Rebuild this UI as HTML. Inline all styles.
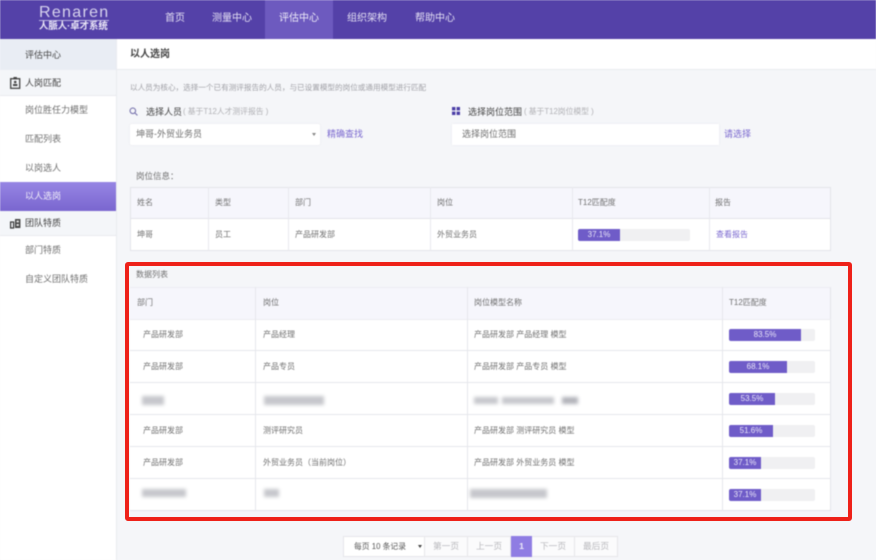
<!DOCTYPE html>
<html lang="zh"><head><meta charset="utf-8"><style>
html,body{margin:0;padding:0}
body{width:876px;height:560px;overflow:hidden;position:relative;background:#f5f6f9;font-family:"Liberation Sans","Noto Sans CJK SC",sans-serif;color:#666}
div,a,span.a{position:absolute;box-sizing:border-box;white-space:nowrap}
.t{font-size:8px;line-height:12px;color:#707070}
.s{font-size:9px;line-height:12px;color:#707070}
.n{top:12px;font-size:10px;line-height:14px;color:#e4e0f4}
.b{filter:blur(1.8px);background:#c6c7cc}
.bar{left:729px;width:86px;height:12px;background:#f0f0f2;border-radius:2px}
.fill{left:0;top:0;height:12px;background:#6f5cc8;border-radius:2px 0 0 2px;color:#e9e6f8;font-size:8px;line-height:12px;text-align:center}
.pg{top:536px;height:21px;background:#fbfbfc;border:1px solid #e6e6ea;border-left:0;font-size:8.7px;line-height:19px;text-align:center;color:#b9b9bd}
</style></head><body>
<div id="root" style="left:0;top:0;width:876px;height:560px;filter:blur(.45px)">
<!-- nav -->
<div style="left:0;top:0;width:876px;height:39px;background:#5441a8"></div>
<div style="left:265px;top:0;width:68px;height:39px;background:#6d5abf"></div>
<div style="left:39px;top:4px;font-size:16px;line-height:18px;letter-spacing:1.3px;color:#d8d4ee;font-family:'Liberation Sans',sans-serif">Renaren</div>
<div style="left:39px;top:20px;width:70px;height:1px;background:#b9b2e0"></div>
<div style="left:39px;top:20px;font-size:9.4px;line-height:12px;color:#ece9f8;font-weight:bold">人脈人·卓才系统</div>
<div class="n" style="left:165px">首页</div>
<div class="n" style="left:212px">测量中心</div>
<div class="n" style="left:279px;color:#efedf9">评估中心</div>
<div class="n" style="left:347px">组织架构</div>
<div class="n" style="left:415px">帮助中心</div>
<!-- sidebar -->
<div style="left:0;top:39px;width:117px;height:521px;background:#fff;border-right:1px solid #e9ebef"></div>
<div style="left:0;top:39px;width:116px;height:31px;background:#e9edf4"></div>
<div class="s" style="left:25px;top:49px;color:#444">评估中心</div>
<div style="left:0;top:70px;width:116px;height:26px;background:#f4f6f9;border-bottom:1px solid #e8eaef"></div>
<svg style="position:absolute;left:10px;top:77px" width="11" height="12" viewBox="0 0 11 12"><rect x="0.7" y="1.7" width="9" height="9.6" fill="none" stroke="#444" stroke-width="1.3"/><rect x="3.5" y="0" width="3.4" height="2.4" fill="#444"/><circle cx="5.2" cy="5" r="1.3" fill="#444"/><rect x="3" y="7" width="4.4" height="2" fill="#444"/></svg>
<div class="s" style="left:25px;top:77px;color:#444">人岗匹配</div>
<div class="s" style="left:25px;top:104px">岗位胜任力模型</div>
<div class="s" style="left:25px;top:133px">匹配列表</div>
<div class="s" style="left:25px;top:162px">以岗选人</div>
<div style="left:0;top:182px;width:116px;height:29px;background:linear-gradient(#9685e4,#7a66cf)"></div>
<div class="s" style="left:25px;top:190px;color:#efedf9">以人选岗</div>
<div style="left:0;top:211px;width:116px;height:25px;background:#f4f6f9;border-bottom:1px solid #e8eaef"></div>
<svg style="position:absolute;left:10px;top:218px" width="11" height="11" viewBox="0 0 11 11"><rect x="0.6" y="4" width="3" height="6" fill="none" stroke="#333" stroke-width="1.2"/><rect x="5" y="1" width="5.4" height="9" fill="#444"/><rect x="6.5" y="2.5" width="2.4" height="2" fill="#ddd"/><rect x="6.5" y="6" width="2.4" height="2" fill="#ddd"/></svg>
<div class="s" style="left:25px;top:217px;color:#444">团队特质</div>
<div class="s" style="left:25px;top:244px">部门特质</div>
<div class="s" style="left:25px;top:273px">自定义团队特质</div>
<!-- title -->
<div style="left:117px;top:39px;width:759px;height:31px;background:#fff;border-bottom:1px solid #e9ebef"></div>
<div style="left:130px;top:48px;font-size:10px;line-height:14px;color:#444;font-weight:bold">以人选岗</div>
<div class="t" style="left:130px;top:82px;font-size:7.6px;color:#a0a0a6">以人员为核心，选择一个已有测评报告的人员，与已设置模型的岗位或通用模型进行匹配</div>
<!-- selectors -->
<svg style="position:absolute;left:129px;top:107px" width="9" height="9" viewBox="0 0 9 9"><circle cx="3.8" cy="3.8" r="2.8" fill="none" stroke="#6f6aa8"/><path d="M6 6l2.4 2.4" stroke="#6f6aa8"/></svg>
<div class="t" style="left:146px;top:106px;color:#444;font-size:9px">选择人员</div>
<div class="t" style="left:183px;top:106px;font-size:7.8px;color:#b0b0b4">( 基于T12人才测评报告 )</div>
<div style="left:130px;top:124px;width:190px;height:21px;background:#fff;border-radius:2px;box-shadow:0 0 2px #e6e7ec"></div>
<div class="t" style="left:136px;top:128px;font-size:9px">坤哥-外贸业务员</div>
<div style="left:312px;top:133px;border:2px solid transparent;border-top:3px solid #888;border-bottom:0"></div>
<div class="t" style="left:327px;top:128px;color:#7a68cf;font-size:9px">精确查找</div>
<svg style="position:absolute;left:452px;top:107px" width="8" height="8" viewBox="0 0 8 8" fill="#4a3da6"><rect width="3.4" height="3.4"/><rect x="4.6" width="3.4" height="3.4"/><rect y="4.6" width="3.4" height="3.4"/><rect x="4.6" y="4.6" width="3.4" height="3.4"/></svg>
<div class="t" style="left:468px;top:106px;color:#444;font-size:9px">选择岗位范围</div>
<div class="t" style="left:524px;top:106px;font-size:7.8px;color:#b0b0b4">( 基于T12岗位模型 )</div>
<div style="left:452px;top:124px;width:267px;height:21px;background:#fff;box-shadow:0 0 2px #e6e7ec"></div>
<div class="t" style="left:462px;top:128px;font-size:9px">选择岗位范围</div>
<div class="t" style="left:724px;top:128px;color:#7a68cf;font-size:9px">请选择</div>
<div class="t" style="left:136px;top:170px;font-size:8.5px">岗位信息：</div>
<!-- table 1 -->
<div style="left:130px;top:187px;width:701px;height:64px;background:#fff;border:1px solid #e3e4ea"></div>
<div style="left:131px;top:188px;width:699px;height:31px;background:#f6f6fc;border-bottom:1px solid #e3e4ea"></div>
<div style="left:208px;top:187px;width:1px;height:64px;background:#e8e9ee"></div>
<div style="left:288px;top:187px;width:1px;height:64px;background:#e8e9ee"></div>
<div style="left:430px;top:187px;width:1px;height:64px;background:#e8e9ee"></div>
<div style="left:572px;top:187px;width:1px;height:64px;background:#e8e9ee"></div>
<div style="left:709px;top:187px;width:1px;height:64px;background:#e8e9ee"></div>
<div class="t" style="left:137px;top:197px">姓名</div><div class="t" style="left:215px;top:197px">类型</div><div class="t" style="left:295px;top:197px">部门</div><div class="t" style="left:437px;top:197px">岗位</div><div class="t" style="left:578px;top:197px">T12匹配度</div><div class="t" style="left:715px;top:197px">报告</div>
<div class="t" style="left:137px;top:229px">坤哥</div><div class="t" style="left:215px;top:229px">员工</div><div class="t" style="left:295px;top:229px">产品研发部</div><div class="t" style="left:437px;top:229px">外贸业务员</div>
<div class="bar" style="left:578px;top:229px;width:112px"><div class="fill" style="width:42px">37.1%</div></div>
<div class="t" style="left:716px;top:229px;color:#7a68cf">查看报告</div>
<!-- data table -->
<div class="t" style="left:136px;top:269px">数据列表</div>
<div style="left:130px;top:287px;width:701px;height:224px;background:#fff;border:1px solid #e3e4ea;border-top:0;border-left:0"></div>
<div style="left:130px;top:287px;width:701px;height:32px;background:#f6f6fc;border-top:1px solid #ececf2;border-right:1px solid #e3e4ea"></div>
<div style="left:130px;top:319px;width:701px;height:1px;background:#ececf1"></div>
<div style="left:130px;top:350px;width:701px;height:1px;background:#e6e7ec"></div>
<div style="left:130px;top:382px;width:701px;height:1px;background:#e6e7ec"></div>
<div style="left:130px;top:414px;width:701px;height:1px;background:#e6e7ec"></div>
<div style="left:130px;top:446px;width:701px;height:1px;background:#e6e7ec"></div>
<div style="left:130px;top:478px;width:701px;height:1px;background:#e6e7ec"></div>
<div style="left:255px;top:287px;width:1px;height:224px;background:#e6e7ec"></div>
<div style="left:467px;top:287px;width:1px;height:224px;background:#e6e7ec"></div>
<div style="left:722px;top:287px;width:1px;height:224px;background:#e6e7ec"></div>
<div class="t" style="left:137px;top:297px">部门</div><div class="t" style="left:263px;top:297px">岗位</div><div class="t" style="left:474px;top:297px">岗位模型名称</div><div class="t" style="left:729px;top:297px">T12匹配度</div>
<div class="t" style="left:143px;top:329px">产品研发部</div><div class="t" style="left:263px;top:329px">产品经理</div><div class="t" style="left:474px;top:329px">产品研发部 产品经理 模型</div>
<div class="t" style="left:143px;top:361px">产品研发部</div><div class="t" style="left:263px;top:361px">产品专员</div><div class="t" style="left:474px;top:361px">产品研发部 产品专员 模型</div>
<div class="t" style="left:143px;top:425px">产品研发部</div><div class="t" style="left:263px;top:425px">测评研究员</div><div class="t" style="left:474px;top:425px">产品研发部 测评研究员 模型</div>
<div class="t" style="left:143px;top:457px">产品研发部</div><div class="t" style="left:263px;top:457px">外贸业务员（当前岗位）</div><div class="t" style="left:474px;top:457px">产品研发部 外贸业务员 模型</div>
<!-- blurred -->
<div class="b" style="left:142px;top:396px;width:22px;height:9px"></div>
<div class="b" style="left:264px;top:396px;width:60px;height:9px"></div>
<div class="b" style="left:474px;top:397px;width:24px;height:7px"></div>
<div class="b" style="left:502px;top:397px;width:52px;height:7px"></div>
<div class="b" style="left:562px;top:397px;width:16px;height:7px;background:#b2b3ba"></div>
<div class="b" style="left:142px;top:489px;width:44px;height:8px"></div>
<div class="b" style="left:264px;top:489px;width:15px;height:8px"></div>
<div class="b" style="left:470px;top:489px;width:77px;height:9px"></div>
<!-- bars -->
<div class="bar" style="top:329px"><div class="fill" style="width:72px">83.5%</div></div>
<div class="bar" style="top:361px"><div class="fill" style="width:58px">68.1%</div></div>
<div class="bar" style="top:393px"><div class="fill" style="width:46px">53.5%</div></div>
<div class="bar" style="top:425px"><div class="fill" style="width:44px">51.6%</div></div>
<div class="bar" style="top:457px"><div class="fill" style="width:32px">37.1%</div></div>
<div class="bar" style="top:489px"><div class="fill" style="width:32px">37.1%</div></div>
<!-- pagination -->
<div class="pg" style="left:343px;width:82px;border-left:1px solid #e6e6ea;color:#555;text-align:left;padding-left:10px;background:#fff;font-size:7.8px">每页 10 条记录</div>
<div style="left:418px;top:545px;border:2px solid transparent;border-top:3px solid #444;border-bottom:0"></div>
<div class="pg" style="left:425px;width:43px">第一页</div>
<div class="pg" style="left:468px;width:43px">上一页</div>
<div class="pg" style="left:511px;width:21px;background:#8f7de3;border:0;line-height:21px;color:#efedf9;font-weight:bold">1</div>
<div class="pg" style="left:532px;width:43px">下一页</div>
<div class="pg" style="left:575px;width:43px">最后页</div>
</div>
<!-- red box -->
<div style="left:125px;top:262px;width:727px;height:259px;border:4px solid #ee2119;border-radius:3px"></div>
</body></html>
